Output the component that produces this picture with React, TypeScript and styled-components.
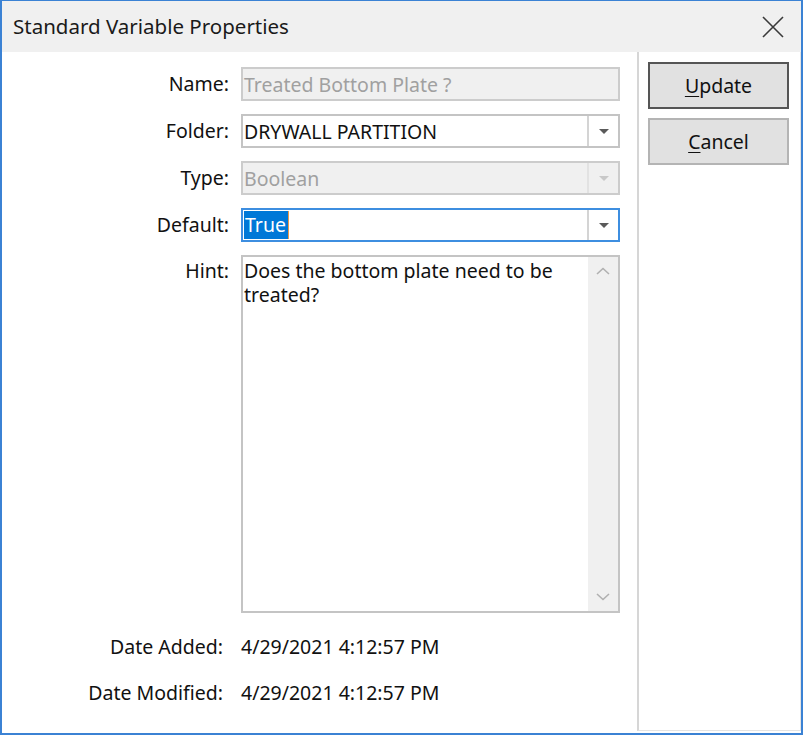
import React from "react";
import styled, { createGlobalStyle } from "styled-components";

const GlobalStyle = createGlobalStyle`
  html, body { margin: 0; padding: 0; background: #ffffff; }
  * { box-sizing: border-box; }
  body { font-family: "Noto Sans", "Open Sans", sans-serif; color: #111111; }
`;

const Window = styled.div`
  width: 803px;
  height: 735px;
  border: 2px solid #3b82d4;
  border-top-width: 1px;
  display: flex;
  flex-direction: column;
  background: #ffffff;
`;

const TitleBar = styled.div`
  height: 51px;
  flex: none;
  background: #f0f0f0;
  display: flex;
  align-items: center;
  justify-content: space-between;
  padding-left: 11px;
`;

const Title = styled.div`
  font-size: 20.5px;
  color: #1a1a1a;
  margin-top: -2px;
`;

const CloseButton = styled.div`
  width: 48px;
  height: 51px;
  display: flex;
  align-items: center;
  justify-content: center;
  margin-right: 4px;
`;

const Body = styled.div`
  flex: 1;
  display: flex;
  min-height: 0;
`;

const FormArea = styled.div`
  flex: 1;
  display: flex;
  flex-direction: column;
  padding-top: 15px;
`;

const FieldGrid = styled.div`
  display: grid;
  grid-template-columns: 227px 379px;
  column-gap: 12px;
  row-gap: 13px;
`;

const Label = styled.div<{ $top?: boolean }>`
  font-size: 19.5px;
  text-align: right;
  align-self: ${(p) => (p.$top ? "start" : "center")};
  line-height: 24px;
  padding-top: ${(p) => (p.$top ? "4px" : "0")};
  color: #111111;
`;

const Box = styled.div<{ $disabled?: boolean; $focused?: boolean }>`
  height: 34px;
  border: 2px solid ${(p) => (p.$focused ? "#3d8ee0" : p.$disabled ? "#cccccc" : "#c4c4c4")};
  background: ${(p) => (p.$disabled ? "#f0f0f0" : "#ffffff")};
  display: flex;
  align-items: stretch;
  font-size: 19.5px;
  color: ${(p) => (p.$disabled ? "#a0a0a0" : "#111111")};
`;

const BoxText = styled.div`
  flex: 1;
  display: flex;
  align-items: center;
  padding-left: 1px;
  white-space: nowrap;
`;

const Selected = styled.span`
  background: #0078d7;
  color: #ffffff;
  height: 28px;
  line-height: 28px;
  padding: 0 2px 0 1px;
  border-right: 1px solid #e89a4c;
`;

const DropButton = styled.div<{ $disabled?: boolean }>`
  width: 31px;
  border-left: 2px solid ${(p) => (p.$disabled ? "#e2e2e2" : "#d4d4d4")};
  background: ${(p) => (p.$disabled ? "#f0f0f0" : "#ffffff")};
  display: flex;
  align-items: center;
  justify-content: center;
`;

const Arrow = styled.div<{ $disabled?: boolean }>`
  width: 0;
  height: 0;
  border-left: 5px solid transparent;
  border-right: 5px solid transparent;
  border-top: 5px solid ${(p) => (p.$disabled ? "#c8c8c8" : "#5a5a5a")};
`;

const HintBox = styled.div`
  height: 358px;
  border: 2px solid #c4c4c4;
  display: flex;
  background: #ffffff;
`;

const HintText = styled.div`
  flex: 1;
  font-size: 19.5px;
  line-height: 24px;
  padding: 2px 4px 0 1px;
  color: #111111;
`;

const ScrollBar = styled.div`
  width: 30px;
  background: #f0f0f0;
  display: flex;
  flex-direction: column;
  justify-content: space-between;
  align-items: center;
  padding: 10px 0;
`;

const DateGrid = styled.div`
  display: grid;
  grid-template-columns: 221px auto;
  column-gap: 18px;
  row-gap: 12px;
  margin-top: 17px;
`;

const DateLabel = styled.div`
  font-size: 19.5px;
  text-align: right;
  line-height: 34px;
  color: #111111;
`;

const DateValue = styled.div`
  font-size: 19.5px;
  line-height: 34px;
  color: #111111;
`;

const SidePanel = styled.div`
  width: 164px;
  flex: none;
  border-left: 2px solid #d6d6d6;
  border-right: 1px solid #e4e4e4;
  border-bottom: 1px solid #e4e4e4;
  margin-bottom: 2px;
  padding: 10px 9px 0 9px;
  display: flex;
  flex-direction: column;
  gap: 9px;
`;

const Button = styled.div<{ $default?: boolean }>`
  width: 141px;
  height: 47px;
  background: #e1e1e1;
  border: 2px solid ${(p) => (p.$default ? "#555555" : "#b4b4b4")};
  display: flex;
  align-items: center;
  justify-content: center;
  font-size: 19.5px;
  color: #111111;
`;

const Mnemonic = styled.span`
  text-decoration: underline;
  text-underline-offset: 3px;
`;

const Chevron = ({ up }: { up?: boolean }) => (
  <svg width="14" height="8" viewBox="0 0 14 8">
    <path
      d={up ? "M1 7 L7 1.5 L13 7" : "M1 1 L7 6.5 L13 1"}
      fill="none"
      stroke="#b0b0b0"
      strokeWidth="1.6"
    />
  </svg>
);

export default function App() {
  return (
    <>
      <GlobalStyle />
      <Window>
        <TitleBar>
          <Title>Standard Variable Properties</Title>
          <CloseButton>
            <svg width="22" height="22" viewBox="0 0 22 22">
              <path d="M1 1 L21 21 M21 1 L1 21" stroke="#3a3a3a" strokeWidth="1.6" />
            </svg>
          </CloseButton>
        </TitleBar>
        <Body>
          <FormArea>
            <FieldGrid>
              <Label>Name:</Label>
              <Box $disabled>
                <BoxText>Treated Bottom Plate ?</BoxText>
              </Box>

              <Label>Folder:</Label>
              <Box>
                <BoxText>DRYWALL PARTITION</BoxText>
                <DropButton>
                  <Arrow />
                </DropButton>
              </Box>

              <Label>Type:</Label>
              <Box $disabled>
                <BoxText>Boolean</BoxText>
                <DropButton $disabled>
                  <Arrow $disabled />
                </DropButton>
              </Box>

              <Label>Default:</Label>
              <Box $focused>
                <BoxText>
                  <Selected>True</Selected>
                </BoxText>
                <DropButton>
                  <Arrow />
                </DropButton>
              </Box>

              <Label $top>Hint:</Label>
              <HintBox>
                <HintText>Does the bottom plate need to be treated?</HintText>
                <ScrollBar>
                  <Chevron up />
                  <Chevron />
                </ScrollBar>
              </HintBox>
            </FieldGrid>
            <DateGrid>
              <DateLabel>Date Added:</DateLabel>
              <DateValue>4/29/2021 4:12:57 PM</DateValue>
              <DateLabel>Date Modified:</DateLabel>
              <DateValue>4/29/2021 4:12:57 PM</DateValue>
            </DateGrid>
          </FormArea>
          <SidePanel>
            <Button $default>
              <span>
                <Mnemonic>U</Mnemonic>pdate
              </span>
            </Button>
            <Button>
              <span>
                <Mnemonic>C</Mnemonic>ancel
              </span>
            </Button>
          </SidePanel>
        </Body>
      </Window>
    </>
  );
}
